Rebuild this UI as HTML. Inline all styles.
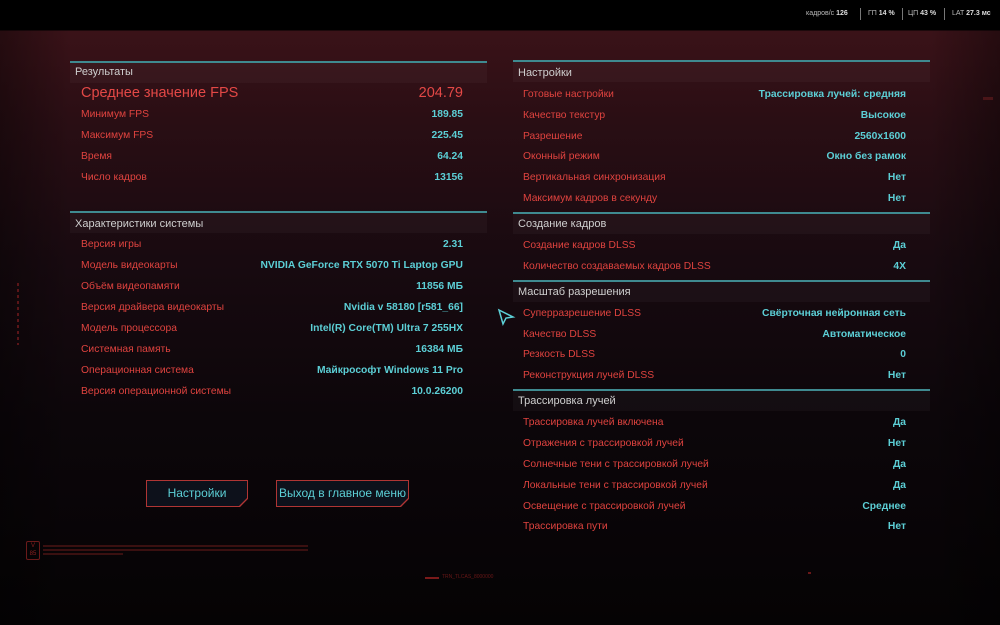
<!DOCTYPE html>
<html><head><meta charset="utf-8"><style>
*{margin:0;padding:0;box-sizing:border-box}
body{width:1000px;height:625px;overflow:hidden;position:relative;font-family:"Liberation Sans","Noto Sans CJK SC",sans-serif;
background:linear-gradient(180deg,#000 0,#000 30px,#3a1218 31px,#2a0e14 120px,#180a10 260px,#0c060a 420px,#050304 625px)}
.vig{position:absolute;left:0;top:30px;width:1000px;height:595px;background:linear-gradient(90deg,rgba(0,0,0,0.35) 0,rgba(0,0,0,0) 70px,rgba(0,0,0,0) 930px,rgba(0,0,0,0.35) 1000px)}
.top{position:absolute;left:0;top:0;width:1000px;height:30px;background:#000}
.stat{position:absolute;top:10px;font-size:7px;color:#bbb}
.stat b{color:#ddd}
.sep{position:absolute;top:8px;width:1px;height:12px;background:#777}
.line{position:absolute;height:2px;background:#3f8a90}
.band{position:absolute;height:20px;background:rgba(255,255,255,0.03)}
.hdr{position:absolute;font-size:11px;color:#cfcfcf}
.row{position:absolute;display:flex;justify-content:space-between;font-size:10.3px;height:14px;line-height:14px}
.row span:first-child{color:#e0433f}
.row span:last-child{color:#5ccfd6;font-weight:bold}
.big{font-size:14.5px;height:18px;line-height:18px}
.big span:last-child{color:#e34846;font-weight:normal}
.big span:first-child{color:#e34846}
.btn{position:absolute;height:27px;background:#0d111b;color:#5ccfd6;font-size:12px;text-align:center;line-height:27px}
.btnb{position:absolute;height:27px;background:#b03534;clip-path:polygon(0 0,100% 0,100% 70%,calc(100% - 8px) 100%,0 100%)}
</style></head><body>
<div class="top"></div>
<div class="vig"></div>
<div class="stat" style="left:806px">кадров/с <b>126</b></div>
<div class="sep" style="left:860px"></div>
<div class="stat" style="left:868px">ГП <b>14 %</b></div>
<div class="sep" style="left:902px"></div>
<div class="stat" style="left:908px">ЦП <b>43 %</b></div>
<div class="sep" style="left:944px"></div>
<div class="stat" style="left:952px">LAT <b>27.3 мс</b></div>

<!-- left -->
<div class="line" style="left:70px;top:61px;width:417px"></div>
<div class="band" style="left:70px;top:63px;width:417px"></div>
<div class="hdr" style="left:75px;top:66px">Результаты</div>
<div class="row big" style="left:81px;top:84px;width:382px"><span>Среднее значение FPS</span><span>204.79</span></div>
<div class="row" style="left:81px;top:108px;width:382px"><span>Минимум FPS</span><span>189.85</span></div>
<div class="row" style="left:81px;top:129px;width:382px"><span>Максимум FPS</span><span>225.45</span></div>
<div class="row" style="left:81px;top:150px;width:382px"><span>Время</span><span>64.24</span></div>
<div class="row" style="left:81px;top:171px;width:382px"><span>Число кадров</span><span>13156</span></div>

<div class="line" style="left:70px;top:211px;width:417px"></div>
<div class="band" style="left:70px;top:213px;width:417px"></div>
<div class="hdr" style="left:75px;top:218px">Характеристики системы</div>
<div class="row" style="left:81px;top:238px;width:382px"><span>Версия игры</span><span>2.31</span></div>
<div class="row" style="left:81px;top:259px;width:382px"><span>Модель видеокарты</span><span>NVIDIA GeForce RTX 5070 Ti Laptop GPU</span></div>
<div class="row" style="left:81px;top:280px;width:382px"><span>Объём видеопамяти</span><span>11856 МБ</span></div>
<div class="row" style="left:81px;top:301px;width:382px"><span>Версия драйвера видеокарты</span><span>Nvidia v 58180 [r581_66]</span></div>
<div class="row" style="left:81px;top:322px;width:382px"><span>Модель процессора</span><span>Intel(R) Core(TM) Ultra 7 255HX</span></div>
<div class="row" style="left:81px;top:343px;width:382px"><span>Системная память</span><span>16384 МБ</span></div>
<div class="row" style="left:81px;top:364px;width:382px"><span>Операционная система</span><span>Майкрософт Windows 11 Pro</span></div>
<div class="row" style="left:81px;top:385px;width:382px"><span>Версия операционной системы</span><span>10.0.26200</span></div>

<div class="btnb" style="left:146px;top:480px;width:102px"></div>
<div class="btn" style="left:147px;top:481px;width:100px;height:25px;line-height:25px;clip-path:polygon(0 0,100% 0,100% 68%,calc(100% - 8px) 100%,0 100%)">Настройки</div>
<div class="btnb" style="left:276px;top:480px;width:133px"></div>
<div class="btn" style="left:277px;top:481px;width:131px;height:25px;line-height:25px;clip-path:polygon(0 0,100% 0,100% 68%,calc(100% - 8px) 100%,0 100%)">Выход в главное меню</div>

<!-- right -->
<div class="line" style="left:513px;top:60px;width:417px"></div>
<div class="band" style="left:513px;top:62px;width:417px"></div>
<div class="hdr" style="left:518px;top:67px">Настройки</div>
<div class="row" style="left:523px;top:88px;width:383px"><span>Готовые настройки</span><span>Трассировка лучей: средняя</span></div>
<div class="row" style="left:523px;top:109px;width:383px"><span>Качество текстур</span><span>Высокое</span></div>
<div class="row" style="left:523px;top:130px;width:383px"><span>Разрешение</span><span>2560x1600</span></div>
<div class="row" style="left:523px;top:150px;width:383px"><span>Оконный режим</span><span>Окно без рамок</span></div>
<div class="row" style="left:523px;top:171px;width:383px"><span>Вертикальная синхронизация</span><span>Нет</span></div>
<div class="row" style="left:523px;top:192px;width:383px"><span>Максимум кадров в секунду</span><span>Нет</span></div>

<div class="line" style="left:513px;top:212px;width:417px"></div>
<div class="band" style="left:513px;top:214px;width:417px"></div>
<div class="hdr" style="left:518px;top:218px">Создание кадров</div>
<div class="row" style="left:523px;top:239px;width:383px"><span>Создание кадров DLSS</span><span>Да</span></div>
<div class="row" style="left:523px;top:260px;width:383px"><span>Количество создаваемых кадров DLSS</span><span>4X</span></div>

<div class="line" style="left:513px;top:280px;width:417px"></div>
<div class="band" style="left:513px;top:282px;width:417px"></div>
<div class="hdr" style="left:518px;top:286px">Масштаб разрешения</div>
<div class="row" style="left:523px;top:307px;width:383px"><span>Суперразрешение DLSS</span><span>Свёрточная нейронная сеть</span></div>
<div class="row" style="left:523px;top:328px;width:383px"><span>Качество DLSS</span><span>Автоматическое</span></div>
<div class="row" style="left:523px;top:348px;width:383px"><span>Резкость DLSS</span><span>0</span></div>
<div class="row" style="left:523px;top:369px;width:383px"><span>Реконструкция лучей DLSS</span><span>Нет</span></div>

<div class="line" style="left:513px;top:389px;width:417px"></div>
<div class="band" style="left:513px;top:391px;width:417px"></div>
<div class="hdr" style="left:518px;top:395px">Трассировка лучей</div>
<div class="row" style="left:523px;top:416px;width:383px"><span>Трассировка лучей включена</span><span>Да</span></div>
<div class="row" style="left:523px;top:437px;width:383px"><span>Отражения с трассировкой лучей</span><span>Нет</span></div>
<div class="row" style="left:523px;top:458px;width:383px"><span>Солнечные тени с трассировкой лучей</span><span>Да</span></div>
<div class="row" style="left:523px;top:479px;width:383px"><span>Локальные тени с трассировкой лучей</span><span>Да</span></div>
<div class="row" style="left:523px;top:500px;width:383px"><span>Освещение с трассировкой лучей</span><span>Среднее</span></div>
<div class="row" style="left:523px;top:520px;width:383px"><span>Трассировка пути</span><span>Нет</span></div>

<!-- cursor -->
<svg style="position:absolute;left:497px;top:308px" width="20" height="20" viewBox="0 0 20 20"><path d="M2 2 L16 9 L9 10 L6 16 Z" fill="none" stroke="#5ccfd6" stroke-width="1.5"/></svg>

<!-- decor -->
<div style="position:absolute;left:26px;top:541px;width:14px;height:19px;border:1px solid #6a1a1a;border-radius:2px;color:#8a2020;font-size:6px;line-height:8px;text-align:center">V<br>85</div>
<div style="position:absolute;left:43px;top:545px;width:265px;height:2px;background:#3a1010"></div>
<div style="position:absolute;left:43px;top:549px;width:265px;height:2px;background:#3a1010"></div>
<div style="position:absolute;left:43px;top:553px;width:80px;height:2px;background:#3a1010"></div>
<div style="position:absolute;left:425px;top:577px;width:14px;height:2px;background:#7a1a1a"></div>
<div style="position:absolute;left:442px;top:574px;font-size:5px;color:#6a1818">TRN_TLCAS_8000000</div>
<div style="position:absolute;left:17px;top:283px;width:2px;height:62px;background:repeating-linear-gradient(#5a1518 0 3px,transparent 3px 6px)"></div>
<div style="position:absolute;left:983px;top:97px;width:10px;height:3px;background:#4a1518"></div>
<div style="position:absolute;left:808px;top:572px;width:3px;height:2px;background:#6a1818"></div>
</body></html>
